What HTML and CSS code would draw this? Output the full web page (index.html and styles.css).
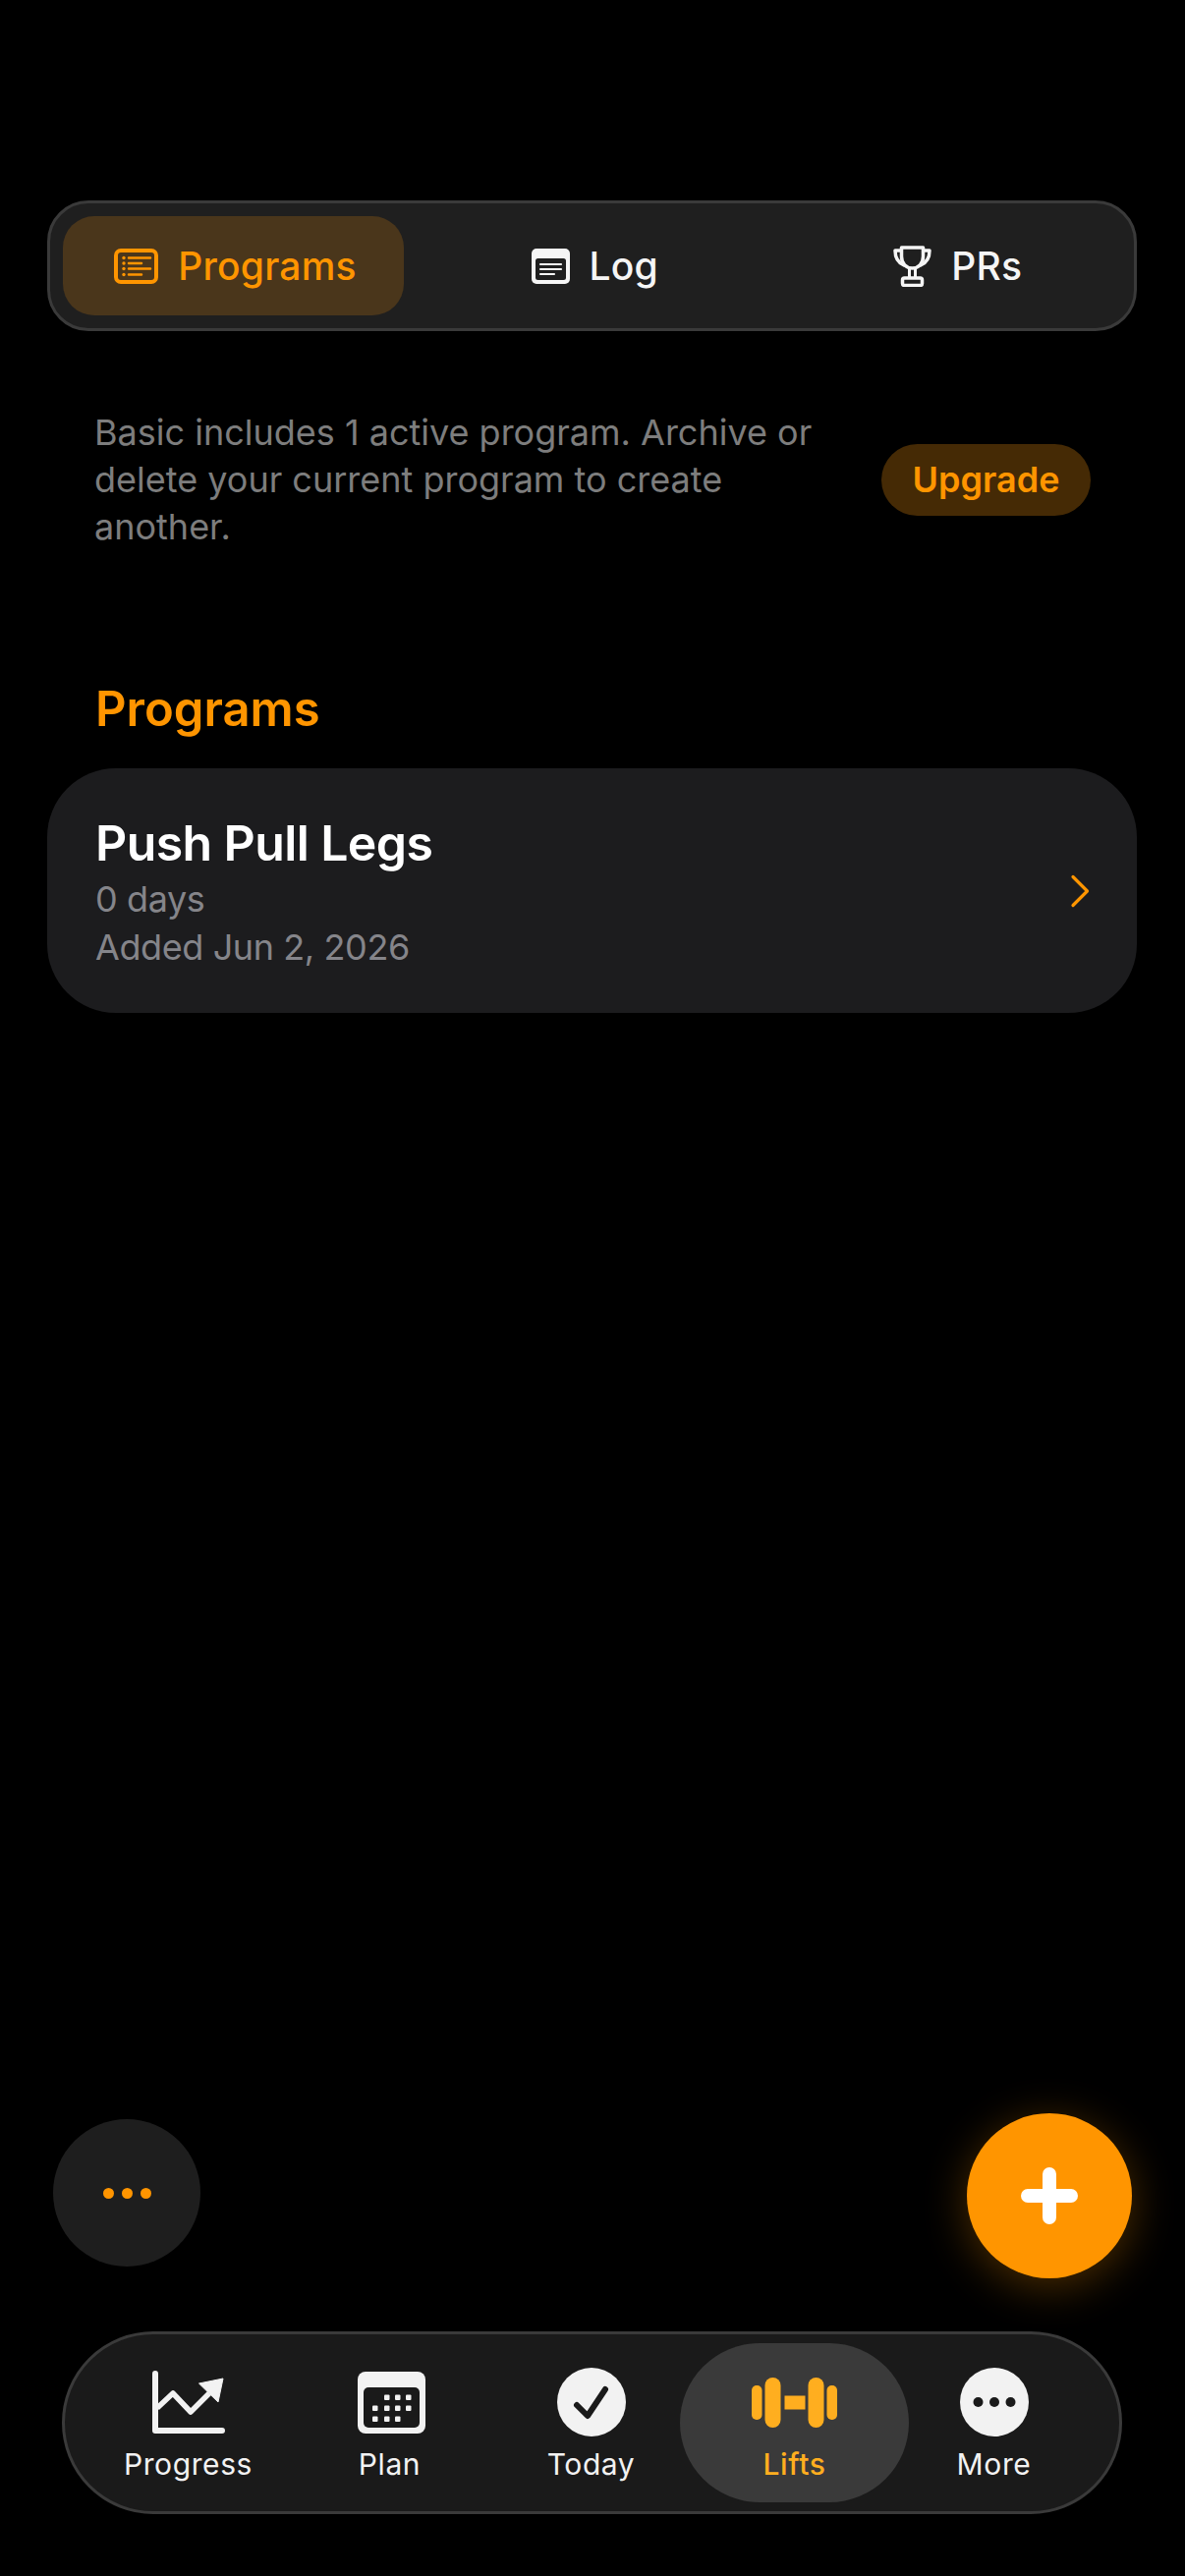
FILE: index.html
```html
<!DOCTYPE html>
<html lang="en">
<head>
    <meta charset="UTF-8">
    <meta name="viewport" content="width=device-width, initial-scale=1.0">
    <title>Lifts</title>
    <link rel="stylesheet" href="styles.css">
</head>
<body>
    <div class="page">
        <div class="tabs">
            <div class="tab tab-active">
                <svg class="tab-icon" width="45" height="36" viewBox="0 0 45 36">
                    <rect x="2" y="2" width="41" height="32" rx="5" fill="none" stroke="currentColor" stroke-width="4"/>
                    <path d="M15 9.500H37M15 15H28M15 20.500H37M15 26.500H28" fill="none" stroke="currentColor" stroke-width="2.500" stroke-linecap="round"/>
                    <circle cx="10" cy="9.500" r="1.700" fill="currentColor"/>
                    <circle cx="10" cy="15" r="1.700" fill="currentColor"/>
                    <circle cx="10" cy="20.500" r="1.700" fill="currentColor"/>
                    <circle cx="10" cy="26.500" r="1.700" fill="currentColor"/>
                </svg>
                <span>Programs</span>
            </div>
            <div class="tab tab-log">
                <svg class="tab-icon" width="39" height="36" viewBox="0 0 39 36">
                    <rect width="39" height="36" rx="5" fill="currentColor"/>
                    <rect x="4" y="10" width="31" height="22" rx="2.500" fill="#1f1f1f"/>
                    <path d="M9 16H30M9 21H30M9 26H23" fill="none" stroke="currentColor" stroke-width="2.200" stroke-linecap="round"/>
                </svg>
                <span>Log</span>
            </div>
            <div class="tab">
                <svg class="tab-icon" width="39" height="42" viewBox="0 0 39 42">
                    <path d="M8.500 2H30.500V11C30.500 18 26 23 19.500 23C13 23 8.500 18 8.500 11Z" fill="none" stroke="currentColor" stroke-width="3.500" stroke-linejoin="round"/>
                    <path d="M8 5H2C2 12 4 17 11 20M31 5H37C37 12 35 17 28 20" fill="none" stroke="currentColor" stroke-width="3.500" stroke-linecap="round" stroke-linejoin="round"/>
                    <path d="M16.500 23V33M22.500 23V33" fill="none" stroke="currentColor" stroke-width="3"/>
                    <rect x="9.500" y="33" width="20" height="7.500" rx="2" fill="none" stroke="currentColor" stroke-width="3.500"/>
                </svg>
                <span>PRs</span>
            </div>
        </div>

        <div class="notice">
            <p class="notice-text">Basic includes 1 active program. Archive or delete your current program to create another.</p>
            <div class="upgrade">Upgrade</div>
        </div>

        <h2 class="section-title">Programs</h2>

        <div class="card">
            <div class="card-body">
                <div class="card-title">Push Pull Legs</div>
                <div class="card-meta">0 days</div>
                <div class="card-meta">Added Jun 2, 2026</div>
            </div>
            <svg width="20" height="34" viewBox="0 0 20 34">
                <path d="M3 2.500L17.500 17L3 31.500" fill="none" stroke="#ff9500" stroke-width="3.200" stroke-linecap="round" stroke-linejoin="round"/>
            </svg>
        </div>

        <div class="actions">
            <div class="more-btn">
                <span class="dot"></span>
                <span class="dot"></span>
                <span class="dot"></span>
            </div>
            <div class="add-btn">
                <svg width="58" height="58" viewBox="0 0 58 58">
                    <path d="M29 7V51M7 29H51" fill="none" stroke="#fff" stroke-width="14" stroke-linecap="round"/>
                </svg>
            </div>
        </div>

        <nav class="nav">
            <div class="nav-item">
                <div class="nav-icon">
                    <svg width="74" height="64" viewBox="0 0 74 64">
                        <path d="M3 3V61H71" fill="none" stroke="currentColor" stroke-width="6" stroke-linecap="round" stroke-linejoin="round"/>
                        <path d="M5 38L21 23L39 42L58 23" fill="none" stroke="currentColor" stroke-width="5.500" stroke-linejoin="round"/>
                        <path d="M72 8L47.500 13L67 32Z" fill="currentColor" stroke="currentColor" stroke-width="1" stroke-linejoin="round"/>
                    </svg>
                </div>
                <span>Progress</span>
            </div>
            <div class="nav-item">
                <div class="nav-icon nav-icon-plan">
                    <svg width="69" height="63" viewBox="0 0 69 63">
                        <rect width="69" height="63" rx="8" fill="currentColor"/>
                        <rect x="6" y="16" width="57" height="41" rx="5" fill="#1a1a1a"/>
                        <g fill="currentColor">
                            <rect x="27" y="23.500" width="5.500" height="5.500" rx="1"/>
                            <rect x="38" y="23.500" width="5.500" height="5.500" rx="1"/>
                            <rect x="49" y="23.500" width="5.500" height="5.500" rx="1"/>
                            <rect x="15" y="34.500" width="5.500" height="5.500" rx="1"/>
                            <rect x="27" y="34.500" width="5.500" height="5.500" rx="1"/>
                            <rect x="38" y="34.500" width="5.500" height="5.500" rx="1"/>
                            <rect x="49" y="34.500" width="5.500" height="5.500" rx="1"/>
                            <rect x="15" y="45.500" width="5.500" height="5.500" rx="1"/>
                            <rect x="27" y="45.500" width="5.500" height="5.500" rx="1"/>
                            <rect x="38" y="45.500" width="5.500" height="5.500" rx="1"/>
                        </g>
                    </svg>
                </div>
                <span>Plan</span>
            </div>
            <div class="nav-item">
                <div class="nav-icon">
                    <svg width="70" height="70" viewBox="0 0 70 70">
                        <circle cx="35" cy="35" r="35" fill="currentColor"/>
                        <path d="M20 38L31 49L49 22" fill="none" stroke="#1a1a1a" stroke-width="6" stroke-linecap="round" stroke-linejoin="round"/>
                    </svg>
                </div>
                <span>Today</span>
            </div>
            <div class="nav-item nav-item-active">
                <div class="nav-icon">
                    <svg width="87" height="51" viewBox="0 0 87 51">
                        <g fill="currentColor">
                            <rect x="0" y="8" width="10.500" height="35" rx="5"/>
                            <rect x="13.500" y="0" width="16" height="51" rx="8"/>
                            <rect x="33.500" y="18.500" width="21" height="14"/>
                            <rect x="57.500" y="0" width="16" height="51" rx="8"/>
                            <rect x="76.500" y="8" width="10.500" height="35" rx="5"/>
                        </g>
                    </svg>
                </div>
                <span>Lifts</span>
            </div>
            <div class="nav-item">
                <div class="nav-icon">
                    <svg width="70" height="70" viewBox="0 0 70 70">
                        <circle cx="35" cy="35" r="35" fill="currentColor"/>
                        <g fill="#1a1a1a">
                            <circle cx="18.500" cy="35" r="5"/>
                            <circle cx="35" cy="35" r="5"/>
                            <circle cx="51.500" cy="35" r="5"/>
                        </g>
                    </svg>
                </div>
                <span>More</span>
            </div>
        </nav>
    </div>
</body>
</html>
```

FILE: styles.css
```css
* {
    box-sizing: border-box;
}

body {
    margin: 0;
    background-color: #000;
    font-family: Inter, "Noto Sans", sans-serif;
}

.page {
    height: 2622px;
    display: flex;
    flex-direction: column;
    padding: 204px 49px 63px 48px;
    overflow: hidden;
}

/* top segmented control */
.tabs {
    height: 133px;
    display: flex;
    align-items: center;
    gap: 11px;
    padding-left: 13px;
    background-color: #1f1f1f;
    border: 3px solid #3a3a3a;
    border-radius: 42px;
}

.tab {
    flex: 1;
    height: 101px;
    display: flex;
    align-items: center;
    justify-content: center;
    gap: 20px;
    color: #f5f5f5;
    font-size: 39px;
    font-weight: 550;
    letter-spacing: 0.2px;
}

.tab-active {
    flex: none;
    width: 347px;
    padding-left: 4px;
    background-color: #4a361b;
    border-radius: 32px;
    color: #ff9500;
}

.tab-log {
    padding-left: 4px;
}

.tab-icon {
    flex: none;
}

/* plan limit notice */
.notice {
    display: flex;
    align-items: center;
    justify-content: space-between;
    margin-top: 79px;
    padding: 0 47px 0 48px;
}

.notice-text {
    width: 760px;
    margin: 0;
    color: #7d7d7d;
    font-size: 36px;
    line-height: 48px;
}

.upgrade {
    width: 213px;
    height: 73px;
    display: flex;
    align-items: center;
    justify-content: center;
    background-color: #452a05;
    border-radius: 37px;
    color: #ff9500;
    font-size: 36px;
    font-weight: 600;
}

.section-title {
    margin: 134px 0 0;
    padding-left: 49px;
    color: #ff9500;
    font-size: 49px;
    font-weight: 600;
    line-height: 56px;
}

/* program card */
.card {
    height: 249px;
    margin-top: 32px;
    display: flex;
    align-items: center;
    justify-content: space-between;
    padding: 0 48px 0 49px;
    background-color: #1c1c1e;
    border-radius: 70px;
}

.card-title {
    color: #fff;
    font-size: 50px;
    font-weight: 600;
    line-height: 66px;
    letter-spacing: -0.6px;
}

.card-meta {
    color: #85858a;
    font-size: 36px;
    line-height: 49px;
    letter-spacing: -0.4px;
}

/* floating buttons */
.actions {
    margin-top: auto;
    display: flex;
    align-items: center;
    justify-content: space-between;
    padding: 0 5px 0 6px;
}

.more-btn {
    width: 150px;
    height: 150px;
    margin-bottom: 6px;
    display: flex;
    align-items: center;
    justify-content: center;
    gap: 8px;
    background-color: #1e1e1e;
    border-radius: 50%;
}

.dot {
    width: 11px;
    height: 11px;
    background-color: #ff9500;
    border-radius: 50%;
}

.add-btn {
    width: 168px;
    height: 168px;
    display: flex;
    align-items: center;
    justify-content: center;
    background-color: #ff9500;
    border-radius: 50%;
    box-shadow: 0 8px 44px rgba(255, 149, 0, 0.3);
}

/* bottom nav */
.nav {
    height: 186px;
    margin: 54px 15px 0 15px;
    display: flex;
    align-items: center;
    padding-left: 23px;
    background-color: #1a1a1a;
    border: 3px solid #3a3a3a;
    border-radius: 93px;
}

.nav-item {
    width: 205px;
    height: 162px;
    display: flex;
    flex-direction: column;
    align-items: center;
    color: #f2f2f2;
    font-size: 30px;
    line-height: 36px;
    letter-spacing: 0.6px;
}

.nav-item-active {
    width: 233px;
    margin: 0 -16px 0 -12px;
    background-color: #3a3a3a;
    border-radius: 81px;
    color: #ffae1f;
    font-weight: 500;
}

.nav-icon {
    height: 70px;
    margin-top: 25px;
    margin-bottom: 10px;
    display: flex;
    align-items: center;
    justify-content: center;
}

.nav-icon-plan {
    margin-left: 3px;
}
```
